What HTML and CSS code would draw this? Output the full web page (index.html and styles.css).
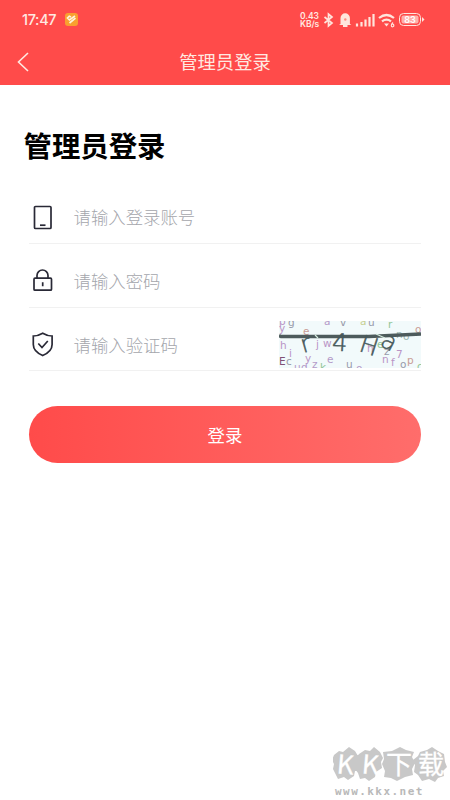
FILE: index.html
```html
<!DOCTYPE html>
<html lang="zh-CN">
<head>
<meta charset="utf-8">
<title>管理员登录</title>
<link rel="stylesheet" href="styles.css">
</head>
<body>
<header class="header">
  <div class="status">
    <span class="time">17:47</span>
    <svg class="app" width="13" height="13" viewBox="0 0 13 13"><rect width="13" height="13" rx="3" fill="#f9a02f"/><path d="M6 4 4.300 3.200 2.500 5l2 2L10 3M4.500 10l6-4.800" fill="none" stroke="#fff3dc" stroke-width="1.700"/></svg>
    <span class="speed"><span>0.43</span><span>KB/s</span></span>
    <svg class="signals" width="126" height="18" viewBox="0 0 126 18" fill="none" stroke="#ffe5dc">
      <path d="m2.500 6 7.500 6-3.500 3V3l3.500 3-7.500 6" stroke-width="1.700"/>
      <path d="M18.500 13V7a4.700 4.700 0 0 1 9.400 0v6l1.500 1H17z" fill="#ffe5dc" stroke="none"/><path d="M21 15h4.500" stroke-width="2"/><circle cx="23.300" cy="8.500" r="1.200" fill="#ff8a82" stroke="none"/>
      <path d="M35 15.500v-3M39.500 15.500V11M43.500 15.500V8.500M47.500 15.500V6M51.500 15.500V3" stroke-width="2.200"/>
      <path d="M57 7q7.500-6 15 0M60 10.300q4.500-3.500 9 0" stroke-width="2.200"/><path d="m62 12.500 5 0-2.500 3z" fill="#ffe5dc" stroke="none"/><path d="M71 11.500q-2 2-1.700 3.300a1.300 1.300 0 1 0 1-1.600" stroke-width="1.200"/>
      <rect x="77.500" y="2.500" width="21" height="12" rx="4" stroke-width="1"/><rect x="79.500" y="4.500" width="17" height="8" rx="2" fill="#ffb0aa" stroke="none"/><path d="m100 6 2.500 2.500-2.500 2.500z" fill="#ffe5dc" stroke="none"/>
      <text class="battery" x="88" y="12" text-anchor="middle">83</text>
    </svg>
  </div>
  <nav class="nav">
    <svg class="back" width="12" height="20" viewBox="0 0 12 20"><path d="M11 1 1.500 10l9.500 9" fill="none" stroke="#ffe9e1" stroke-width="1.600"/></svg>
    <span class="nav-title">管理员登录</span>
  </nav>
</header>
<main class="main">
  <h1 class="title">管理员登录</h1>
  <form class="form">
    <div class="row">
      <svg class="icon" width="26" height="28" viewBox="0 0 26 28"><rect x="5.500" y="2.500" width="16.500" height="22" rx="1" /><path d="M11 21.200h5.500"/></svg>
      <span class="hint">请输入登录账号</span>
    </div>
    <div class="row">
      <svg class="icon" width="26" height="28" viewBox="0 0 26 28"><rect x="5" y="11.200" width="17.500" height="12" rx="1"/><path d="M8 11.200V8.500a5.500 5.500 0 0 1 11 0v2.700M13.700 15.200v4"/></svg>
      <span class="hint">请输入密码</span>
    </div>
    <div class="row">
      <svg class="icon" width="26" height="28" viewBox="0 0 26 28"><path d="M13.700 2.200Q9 5 4.300 5v8.500q0 7 9.400 11 9.400-4 9.400-11V5q-4.700 0-9.400-2.800zM9.300 12.500l3.700 4 5.800-6.500"/></svg>
      <span class="hint">请输入验证码</span>
      <svg class="captcha" width="142" height="47" viewBox="0 0 142 47">
        <rect width="142" height="47" fill="#f2fafb"/>
        <g class="noise">
          <g fill="#b995c6"><text x="0" y="4">p</text><text x="0" y="11">y</text><text x="1" y="28">h</text><text x="10" y="36">i</text><text x="37" y="27">j</text><text x="44" y="26">w</text><text x="26" y="41">y</text><text x="103" y="42">n</text><text x="112" y="45">f</text><text x="117" y="37">7</text><text x="88" y="31">h</text></g>
          <g fill="#989aaa"><text x="9" y="5">g</text><text x="61" y="5">v</text><text x="89" y="5">u</text><text x="7" y="44">c</text><text x="67" y="47">u</text><text x="105" y="34">z</text><text x="121" y="47">o</text></g>
          <g fill="#9bb8b2"><text x="117" y="17">n</text><text x="124" y="19">o</text></g>
          <g fill="#c99c95"><text x="24" y="14">e</text><text x="128" y="43">p</text><text x="136" y="12">o</text></g>
          <g fill="#91c596"><text x="109" y="7">r</text><text x="98" y="27">e</text><text x="41" y="50">k</text><text x="138" y="49">c</text></g>
          <g fill="#b49ac9"><text x="45" y="4">a</text><text x="48" y="42">e</text><text x="33" y="47">z</text><text x="22" y="50">d</text><text x="15" y="50">u</text><text x="77" y="51">o</text></g>
          <text x="81" y="4" fill="#c6cf91">a</text><text x="0" y="44" fill="#805075">E</text>
        </g>
        <path d="M0 14.500 2 15.500h88l52-2.500" class="strike"/>
        <path d="m36 14 3 3M97 13l9 4" stroke="#d6eee0" stroke-width="1.200"/>
        <g class="code"><text x="22" y="31" transform="rotate(-16 27 24)">r</text><text x="53" y="30" transform="rotate(3 60 23)">4</text><text x="81" y="33" transform="rotate(18 90 25)">H</text><text x="102" y="28" transform="rotate(28 109 22)">a</text></g>
      </svg>
    </div>
    <button class="submit" type="button">登录</button>
  </form>
</main>
<footer class="watermark">
  <svg class="brand-mark" width="116" height="35" viewBox="0 0 116 35">
    <path fill="#c8c8c8" d="m1 8 5-4 4 1 6-5 6 4 3 5-1 4 2 6-4 5-1 5-6 4-4-3-6 2-3-6-2-4 1-5-2-4zM26 7l6-4 5 1 4-4 6 5 3 6-2 4 1 6-6 4-1 5-6 4-4-3-5 1-2-6-3-4 1-5-2-4zM50 5l9-1 8-4 6 3 8 2-2 5 3 6-3 6 1 6-8 2-8 4-6-3-7-1 1-6-3-7 2-5zM87 5l7-2 5-3 6 4 6 3 1 8 2 5-4 4 1 5-6 2-3 4-6-3-7 2-4-6-4-3 1-7-2-5 5-4z"/>
    <g class="brand"><text x="4" y="27" transform="rotate(5 12 17)">K</text><text x="29" y="27" transform="rotate(5 37 17)">K</text><text x="53" y="27">下</text><text x="85" y="27">载</text></g>
  </svg>
  <span class="site">www.kkx.net</span>
</footer>
</body>
</html>
```
FILE: styles.css
```css
* { box-sizing: border-box; }
body {
  margin: 0;
  height: 800px;
  display: flex;
  flex-direction: column;
  background: #fff;
  font-family: Roboto, "Noto Sans CJK SC", sans-serif;
  overflow: hidden;
}
.header {
  height: 85px;
  background: #ff4b4a;
  color: #ffe9e1;
}
.status {
  display: flex;
  align-items: center;
  height: 39px;
  padding-left: 22px;
}
.time { width: 43px; font: 500 14.500px Inter, sans-serif; letter-spacing: -.35px; white-space: nowrap; }
.speed {
  display: flex;
  flex-direction: column;
  width: 22px;
  margin-left: 222px;
  font: 600 8.500px/8px Inter, sans-serif;
  letter-spacing: -.1px;
}
.signals { flex: none; }
.battery { font: 600 9px Inter, sans-serif; fill: #fff; stroke: none; }
.nav {
  display: flex;
  align-items: center;
  height: 46px;
  padding-left: 17px;
}
.nav-title { flex: 1; margin-right: 29px; padding-top: 1px; text-align: center; font-size: 18.300px; line-height: 26px; }
.main { flex: 1; padding: 39px 29px 0; }
.title {
  margin: 0 0 19px -5.500px;
  height: 48px;
  color: #000;
  font-size: 28.400px;
  line-height: 48px;
  font-weight: 700;
}
.form { display: flex; flex-direction: column; }
.row {
  display: flex;
  align-items: center;
  height: 63.500px;
  padding-top: 12px;
  border-bottom: 1px solid #f1f1f1;
}
.row:first-child { height: 53px; padding-top: 1px; }
.icon { flex: none; fill: none; stroke: #292936; stroke-width: 1.700; }
.hint { margin-left: 18.500px; padding-top: 1px; color: #a4a6ac; font-size: 17.400px; font-weight: 300; line-height: 26px; }
.row:last-of-type .hint { padding-top: 2px; }
.captcha { margin-left: auto; overflow: hidden; }
.noise { font: 10.500px "DejaVu Sans", sans-serif; }
.strike { fill: none; stroke: #4d5b5c; stroke-width: 3.500; }
.code { font: 200 24px "DejaVu Sans", sans-serif; fill: #46585a; stroke: #46585a; stroke-width: .5; }
.submit {
  height: 57px;
  margin-top: 35px;
  padding: 0;
  border: 0;
  border-radius: 29px;
  background: linear-gradient(90deg, #ff4b4a, #ff6d6b);
  color: #fff;
  font: 17.400px "Noto Sans CJK SC", sans-serif;
}
.watermark {
  display: flex;
  flex-direction: column;
  align-self: flex-end;
  width: 117px;
  height: 53px;
}
.brand-mark { flex: none; }
.brand { font: 26px "Noto Sans CJK SC", sans-serif; fill: #fff; stroke: #fff; stroke-width: .3; }
.site { margin: 2px 0 0 2px; color: #b9b9b9; font: 700 11px/16px "DejaVu Sans Mono", monospace; letter-spacing: 1.450px; }
```
